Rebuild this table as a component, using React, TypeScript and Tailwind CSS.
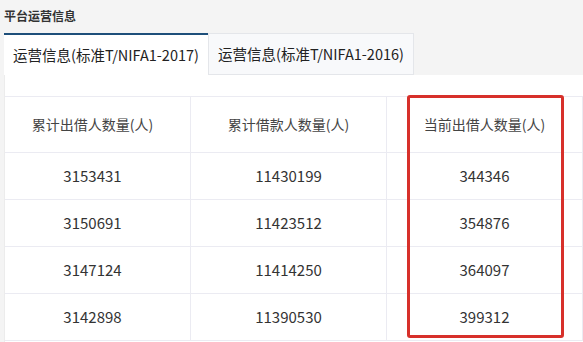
import React from "react";

const rows = [
  ["3153431", "11430199", "344346"],
  ["3150691", "11423512", "354876"],
  ["3147124", "11414250", "364097"],
  ["3142898", "11390530", "399312"],
];

const headers = ["累计出借人数量(人)", "累计借款人数量(人)", "当前出借人数量(人)"];

export default function App() {
  const font = { fontFamily: '"Noto Sans CJK SC", "Noto Sans", sans-serif' };
  return (
    <div
      className="w-[583px] h-[342px] bg-[#f4f4f4] overflow-hidden relative text-[#333]"
      style={font}
    >
      <div className="h-[33px] pl-[4px] pt-[6px] text-[12px] font-bold leading-[20px] text-[#333]">
        平台运营信息
      </div>
      <div className="flex ml-[4px] h-[42px]">
        <div className="w-[204px] bg-white border-t-2 border-[#1e4f7a] flex items-center justify-center text-[14.5px] text-[#222]">
          运营信息(标准T/NIFA1-2017)
        </div>
        <div className="w-[206px] bg-[#f8f9fb] border border-[#e4e6ea] flex items-center justify-center text-[14.5px] text-[#222]">
          运营信息(标准T/NIFA1-2016)
        </div>
      </div>
      <div className="ml-[4px] bg-white border-l border-[#ececec] h-[267px] pt-[21px] overflow-hidden">
        <div className="ml-[-10px] border-t border-[#ebebf2] w-[700px]">
          <div className="flex h-[56px] border-b border-[#ebebf2]">
            {headers.map((h, i) => (
              <div
                key={i}
                className="w-[196px] shrink-0 border-r border-[#ebebf2] flex items-center justify-center text-[14px] text-[#444]"
              >
                {h}
              </div>
            ))}
            <div className="flex-1" />
          </div>
          {rows.map((r, ri) => (
            <div key={ri} className="flex h-[47px] border-b border-[#ebebf2]">
              {r.map((c, ci) => (
                <div
                  key={ci}
                  className="w-[196px] shrink-0 border-r border-[#ebebf2] flex items-center justify-center text-[15px] text-[#333]"
                >
                  {c}
                </div>
              ))}
              <div className="flex-1" />
            </div>
          ))}
        </div>
      </div>
      <div className="absolute left-[407px] top-[95px] w-[157px] h-[243px] border-[3px] border-[#d7302a] rounded-[3px] pointer-events-none" />
    </div>
  );
}
